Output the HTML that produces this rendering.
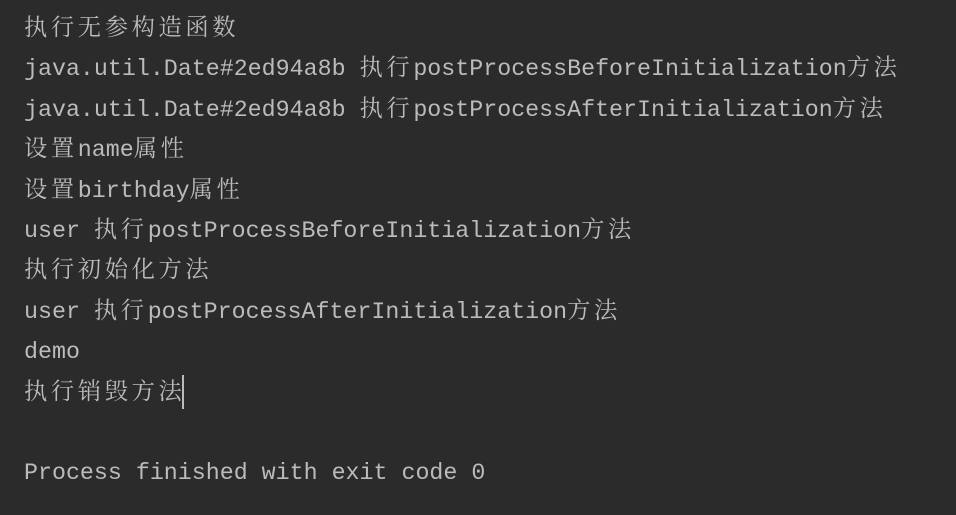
<!DOCTYPE html>
<html><head><meta charset="utf-8"><style>
html,body{margin:0;padding:0;background:#2b2b2b;width:956px;height:515px;overflow:hidden}
.w{position:absolute;left:24px;top:9px;font-family:"Liberation Mono","Noto Serif CJK SC",monospace;font-size:23.3px;color:#bbbbbb}
.l{height:40.4px;line-height:40.4px;white-space:pre}
.c{font-family:"Liberation Mono","Noto Serif CJK SC",serif;letter-spacing:3.6px}
.cur{display:inline-block;width:2px;height:34px;background:#bbbbbb;vertical-align:middle;margin-left:-3px}
</style></head><body><div class="w"><div class="l"><span class="c">执行无参构造函数</span></div><div class="l">java.util.Date#2ed94a8b <span class="c">执行</span>postProcessBeforeInitialization<span class="c">方法</span></div><div class="l">java.util.Date#2ed94a8b <span class="c">执行</span>postProcessAfterInitialization<span class="c">方法</span></div><div class="l"><span class="c">设置</span>name<span class="c">属性</span></div><div class="l"><span class="c">设置</span>birthday<span class="c">属性</span></div><div class="l">user <span class="c">执行</span>postProcessBeforeInitialization<span class="c">方法</span></div><div class="l"><span class="c">执行初始化方法</span></div><div class="l">user <span class="c">执行</span>postProcessAfterInitialization<span class="c">方法</span></div><div class="l">demo</div><div class="l"><span class="c">执行销毁方法</span><span class="cur"></span></div><div class="l"> </div><div class="l">Process finished with exit code 0</div></div></body></html>
